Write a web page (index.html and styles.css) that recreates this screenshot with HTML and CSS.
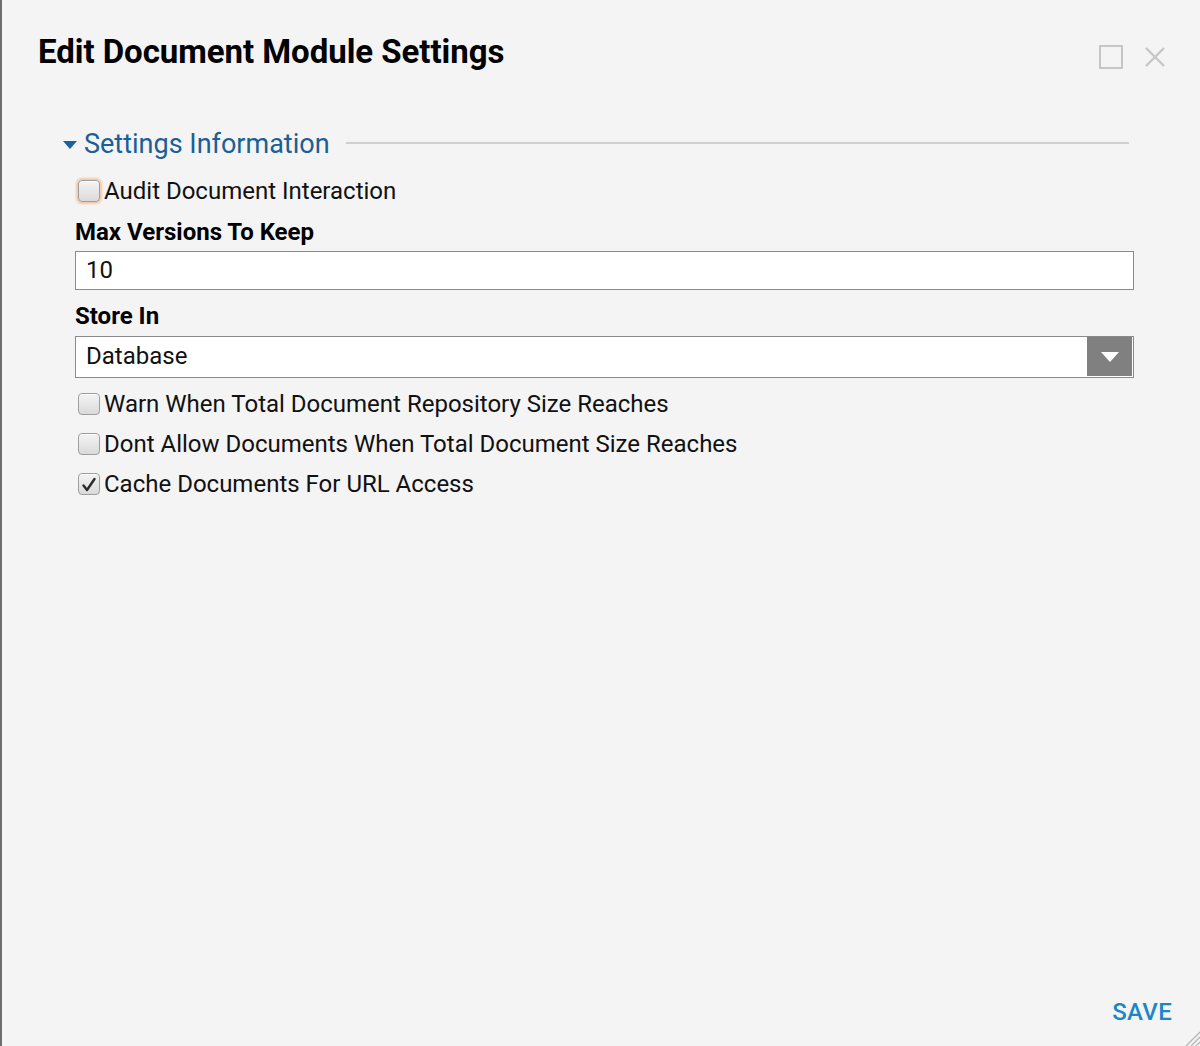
FILE: index.html
```html
<!DOCTYPE html>
<html>
<head>
<meta charset="utf-8">
<link rel="stylesheet" href="styles.css">
</head>
<body>
<div class="dialog">
  <div class="header">
    <h1 class="title">Edit Document Module Settings</h1>
    <div class="win-btns">
      <span class="btn-max"></span>
      <svg class="btn-close" width="22" height="22" viewBox="0 0 22 22"><path d="M2 2 L20 20 M20 2 L2 20" stroke="#c6c6c6" stroke-width="2.4" fill="none"/></svg>
    </div>
  </div>
  <div class="content">
    <div class="section-head">
      <svg class="caret" width="14" height="8" viewBox="0 0 14 8"><path d="M0 0 H14 L7 8 Z" fill="#19629c"/></svg>
      <span class="section-title">Settings Information</span>
      <span class="section-line"></span>
    </div>
    <div class="fields">
      <label class="check-row row-first"><span class="cb cb-focus"></span>Audit Document Interaction</label>
      <div class="field-label">Max Versions To Keep</div>
      <div class="text-input">10</div>
      <div class="field-label label-store">Store In</div>
      <div class="select">
        <span class="select-value">Database</span>
        <span class="select-btn"><svg width="18" height="10" viewBox="0 0 18 10"><path d="M0 0 H18 L9 10 Z" fill="#fff"/></svg></span>
      </div>
      <label class="check-row row-warn"><span class="cb"></span>Warn When Total Document Repository Size Reaches</label>
      <label class="check-row"><span class="cb"></span>Dont Allow Documents When Total Document Size Reaches</label>
      <label class="check-row"><span class="cb checked"><svg width="16" height="16" viewBox="0 0 16 16"><path d="M2.5 8.5 L6 13 L13.5 2" stroke="#2a2a2a" stroke-width="2.4" fill="none" stroke-linecap="round" stroke-linejoin="round"/></svg></span>Cache Documents For URL Access</label>
    </div>
  </div>
  <div class="footer">
    <span class="save">SAVE</span>
  </div>
  <svg class="resize" width="18" height="18" viewBox="0 0 18 18"><path d="M18 4 L4 18 M18 9 L9 18 M18 14 L14 18" stroke="#b5b5b5" stroke-width="1.3" fill="none"/></svg>
</div>
</body>
</html>
```

FILE: styles.css
```css
* { box-sizing: border-box; }
html, body { margin: 0; padding: 0; }
body {
  background: #f4f4f4;
  font-family: Roboto, "Liberation Sans", sans-serif;
  color: #111;
}
.dialog {
  position: relative;
  width: 1200px;
  height: 1046px;
  border-left: 2px solid #6e6e6e;
  display: flex;
  flex-direction: column;
}
.header {
  display: flex;
  justify-content: space-between;
  align-items: flex-start;
  padding: 30px 34px 0 36px;
}
.title {
  margin: 0;
  font-size: 33px;
  font-weight: 700;
  line-height: 44px;
  color: #000;
  letter-spacing: -0.05px;
}
.win-btns {
  display: flex;
  align-items: center;
  gap: 21px;
  margin-top: 15px;
}
.btn-max {
  width: 24px;
  height: 24px;
  border: 2.5px solid #c6c6c6;
}
.content {
  flex: 1;
  padding: 0 66px 0 61px;
}
.section-head {
  display: flex;
  align-items: center;
  margin-top: 53px;
  height: 34px;
}
.caret { margin-right: 7px; margin-top: 2px; }
.section-title {
  font-size: 27px;
  color: #1a5f98;
  line-height: 34px;
}
.section-line {
  flex: 1;
  height: 2px;
  background: #cfcfcf;
  margin-left: 16px;
  margin-right: 5px;
  margin-top: -3px;
}
.fields {
  padding-left: 12px;
}
.check-row {
  display: flex;
  align-items: center;
  font-size: 24px;
  height: 26px;
  margin-top: 14px;
  color: #111;
  white-space: nowrap;
}
.check-row.row-first { margin-top: 17px; }
.check-row.row-warn { margin-top: 13px; }
.cb {
  width: 22px;
  height: 22px;
  margin: 0 4px 0 3px;
  border: 1px solid #9e9e9e;
  border-radius: 4px;
  background: linear-gradient(#f4f4f4, #dadada);
  box-shadow: inset 0 1px 0 #fff;
  display: flex;
  align-items: center;
  justify-content: center;
  flex: none;
}
.cb-focus {
  box-shadow: 0 0 2px 2px #f3c9a8, inset 0 1px 0 #fff;
}
.checked svg { margin-top: 2px; }
.field-label {
  font-size: 24px;
  font-weight: 700;
  margin-top: 14px;
  line-height: 28px;
  color: #000;
}
.field-label.label-store { margin-top: 12px; }
.text-input {
  margin-top: 5px;
  height: 39px;
  border: 1.5px solid #8a8a8a;
  background: #fff;
  font-size: 24px;
  line-height: 36px;
  padding-left: 10px;
}
.select {
  margin-top: 6px;
  height: 42px;
  border: 1.5px solid #8a8a8a;
  background: #fff;
  display: flex;
  align-items: stretch;
  padding: 0 1px 1px 0;
}
.select-value {
  flex: 1;
  font-size: 24px;
  line-height: 38px;
  padding-left: 10px;
}
.select-btn {
  width: 45px;
  background: #808080;
  display: flex;
  align-items: center;
  justify-content: center;
}
.footer {
  display: flex;
  justify-content: flex-end;
  padding: 0 28px 20px 0;
}
.save {
  font-size: 24px;
  font-weight: 500;
  color: #1b87c9;
  letter-spacing: 0.3px;
}
.resize {
  position: absolute;
  right: 0;
  bottom: 0;
}
```
